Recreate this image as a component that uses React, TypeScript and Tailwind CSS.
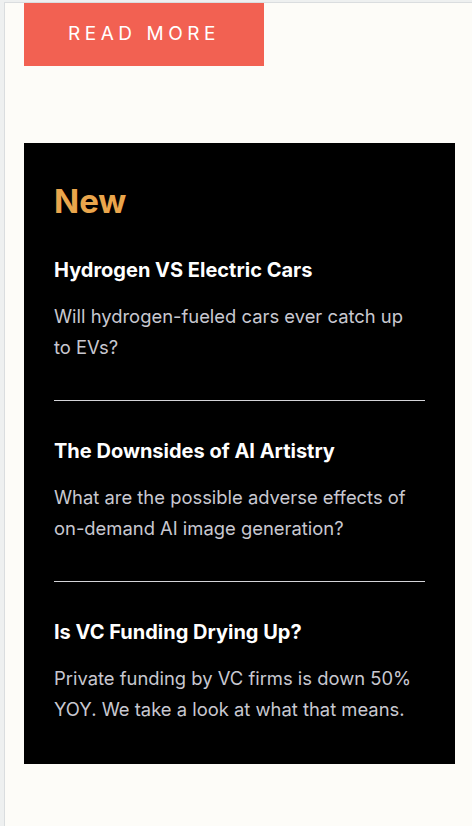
import React from 'react';

type Post = {
    title: string;
    excerpt: string;
};

const posts: Post[] = [
    { title: 'Hydrogen VS Electric Cars', excerpt: 'Will hydrogen-fueled cars ever catch up to EVs?' },
    { title: 'The Downsides of AI Artistry', excerpt: 'What are the possible adverse effects of on-demand AI image generation?' },
    { title: 'Is VC Funding Drying Up?', excerpt: 'Private funding by VC firms is down 50% YOY. We take a look at what that means.' },
];

const PostItem: React.FC<{ post: Post; first: boolean; last: boolean }> = ({ post, first, last }) => (
    <div className={`${first ? '' : 'pt-[38px]'} ${last ? '' : 'pb-[37px] border-b border-[#d4d4d8]'}`}>
        <h3 className="text-[20px] leading-[24px] font-bold text-white">{post.title}</h3>
        <p className="mt-[19px] text-[18.4px] leading-[31px] text-[#c8c8d0]">{post.excerpt}</p>
    </div>
);

export default function App() {
    return (
        <div className="min-h-screen bg-[#eef0f0] pt-[2px] pl-[4px] font-['Inter','Liberation_Sans',sans-serif]">
            <div className="min-h-[824px] bg-[#fdfcf8] border-t border-l border-[#dadddf] pl-[19px] pr-[17px] pb-[62px]">
                <button className="w-[240px] h-[63px] bg-[#f26152] text-white text-[19px] tracking-[0.24em] font-normal">
                    READ MORE
                </button>

                <div className="mt-[77px] bg-black px-[30px] pt-[39px] pb-[39px]">
                    <h2 className="text-[33px] leading-[38px] font-bold text-[#eaa64c] mb-[38px]">New</h2>
                    {posts.map((p, i) => (
                        <PostItem key={i} post={p} first={i === 0} last={i === posts.length - 1} />
                    ))}
                </div>
            </div>
        </div>
    );
}
